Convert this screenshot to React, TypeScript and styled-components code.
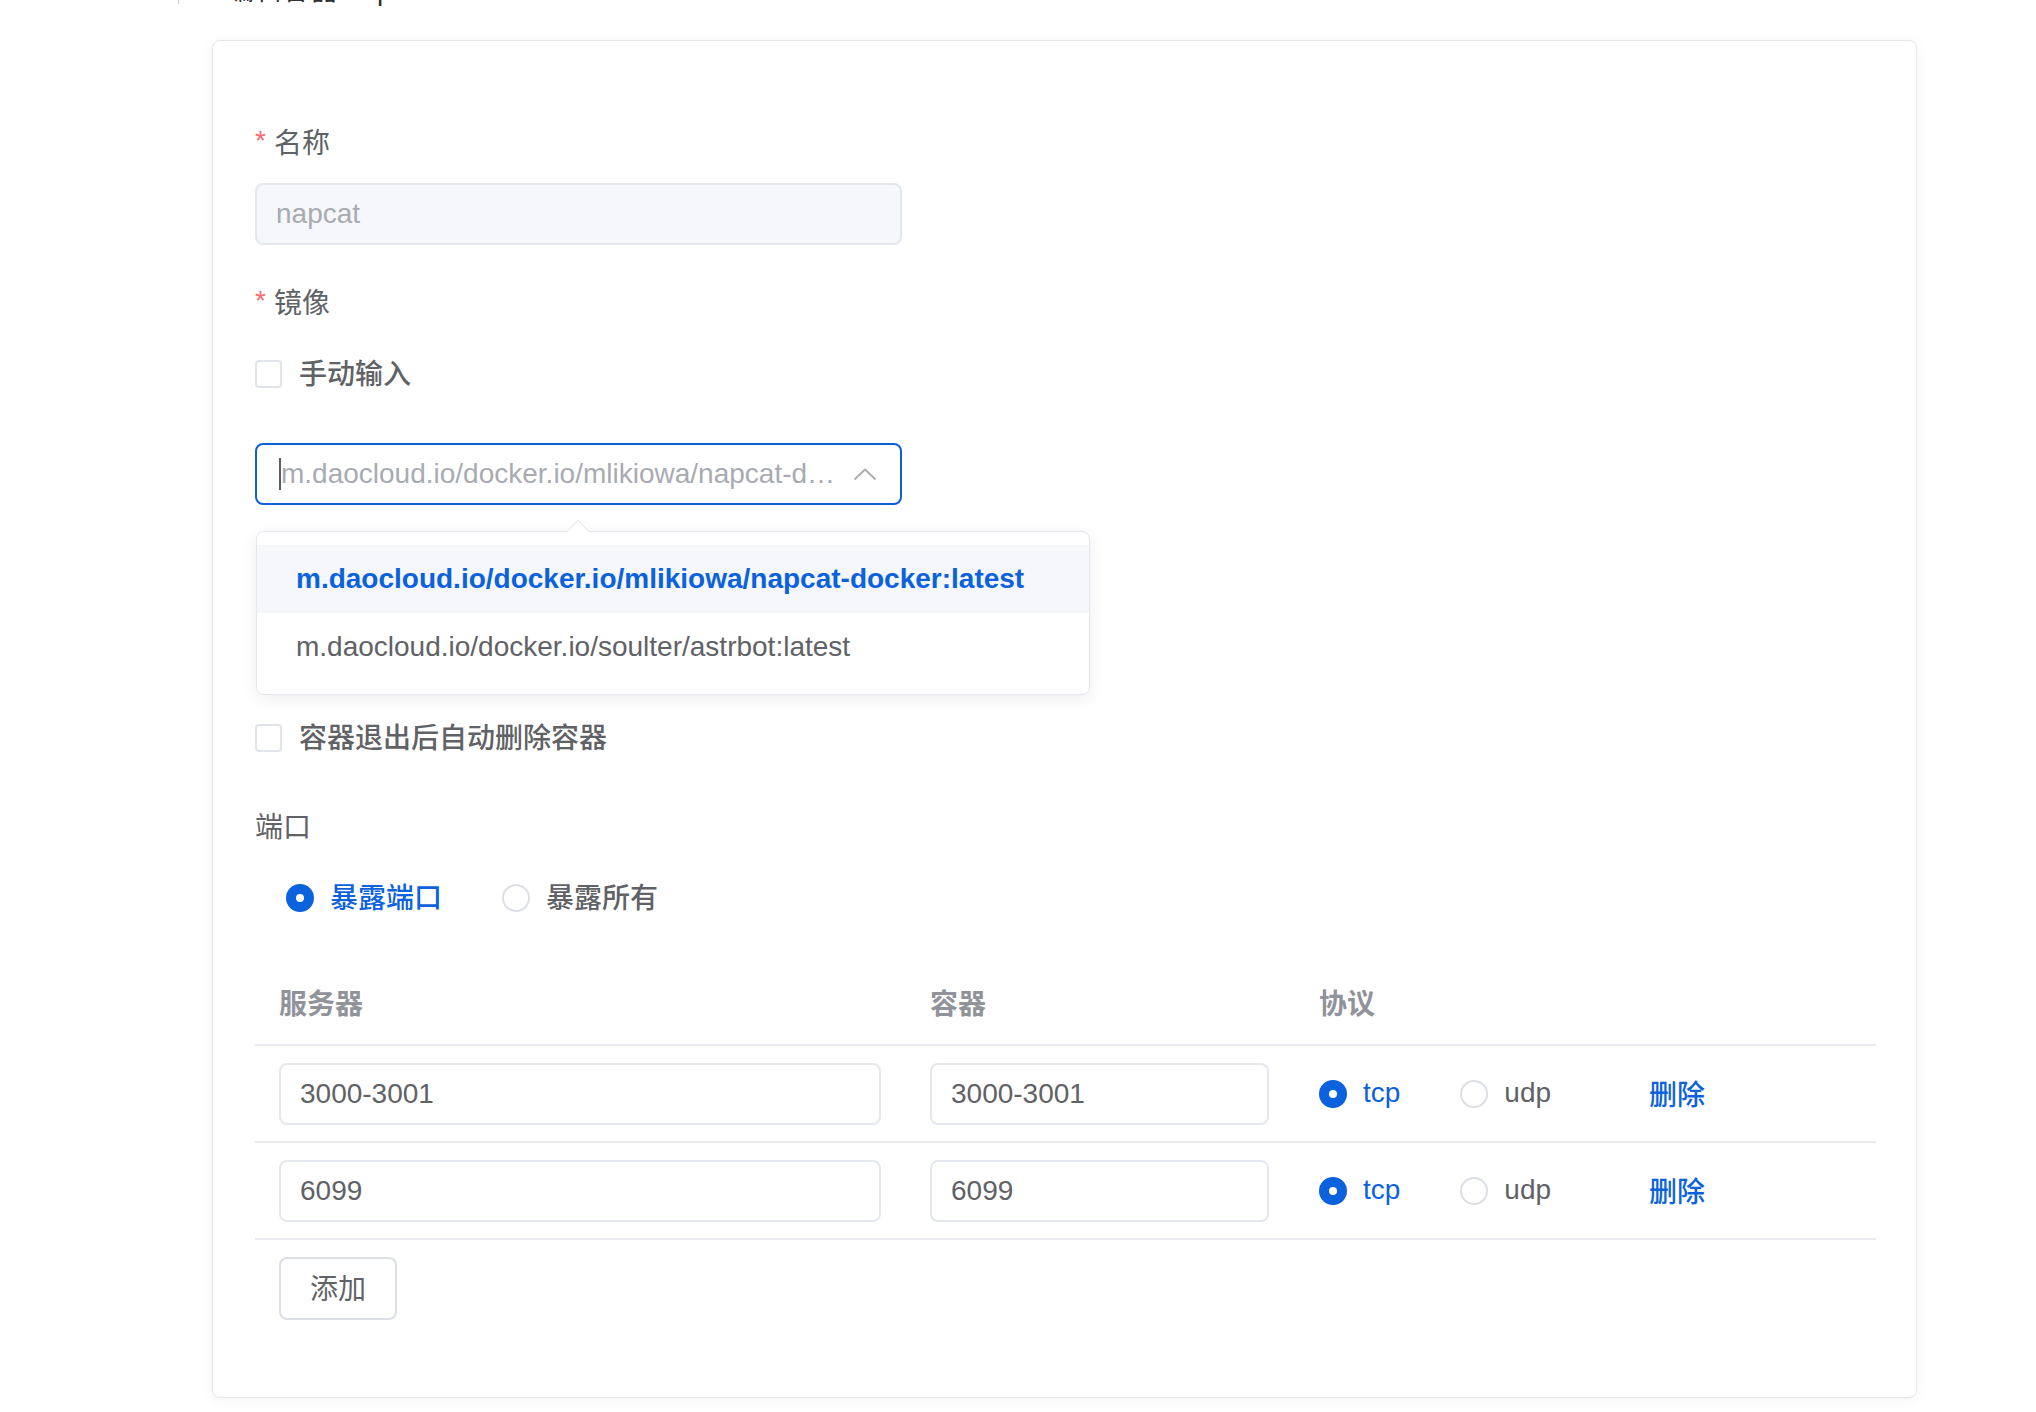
import React from "react";
import styled, { createGlobalStyle } from "styled-components";

const BLUE = "#0b62dc";
const TEXT = "#606266";
const PLACEHOLDER = "#a8abb2";
const LINE = "#e4e7ed";

const GlobalStyle = createGlobalStyle`
  html, body { margin: 0; padding: 0; background: #ffffff; }
  body {
    font-family: "Liberation Sans", "Noto Sans CJK SC", sans-serif;
    color: ${TEXT};
  }
  * { box-sizing: border-box; }
`;

const Page = styled.div`
  width: 2036px;
  min-height: 1412px;
  background: #fff;
`;

const TopBar = styled.div`
  height: 14px;
  overflow: hidden;
  display: flex;
  align-items: flex-start;
  padding-left: 178px;
`;

const TopTick = styled.span`
  flex: none;
  width: 1px;
  height: 4px;
  background: #c8cbd2;
`;

const TopTitle = styled.span`
  margin-left: 47px;
  margin-top: -23px;
  font-size: 28px;
  line-height: 28px;
  color: #303133;
  white-space: nowrap;
`;

const Card = styled.section`
  margin: 26px 0 0 212px;
  width: 1705px;
  border: 1px solid ${LINE};
  border-radius: 8px;
  box-shadow: 0 2px 14px rgba(0, 0, 0, 0.05);
  padding: 81px 40px 77px 42px;
  background: #fff;
`;

const Label = styled.div<{ $mt?: number }>`
  display: flex;
  align-items: center;
  height: 40px;
  padding-bottom: 2px;
  margin-top: ${(p) => p.$mt ?? 0}px;
  font-size: 28px;
  color: ${TEXT};
`;

const Required = styled.span`
  color: #f56c6c;
  margin-right: 8px;
  font-size: 28px;
`;

const TextInput = styled.input<{ $mt?: number }>`
  display: block;
  width: 647px;
  height: 62px;
  margin-top: ${(p) => p.$mt ?? 0}px;
  padding: 0 19px;
  border: 2px solid ${LINE};
  border-radius: 8px;
  font-family: inherit;
  font-size: 28px;
  color: ${TEXT};
  background: #fff;
  outline: none;

  &:disabled {
    background: #f5f7fa;
    color: ${PLACEHOLDER};
    -webkit-text-fill-color: ${PLACEHOLDER};
    opacity: 1;
  }
`;

const CheckRow = styled.label<{ $mt?: number }>`
  display: flex;
  align-items: center;
  height: 40px;
  margin-top: ${(p) => p.$mt ?? 0}px;
`;

const CheckBox = styled.span`
  flex: none;
  width: 27px;
  height: 28px;
  border: 2px solid #e1e4ea;
  border-radius: 4px;
  background: #fff;
`;

const CheckText = styled.span`
  margin-left: 17px;
  padding-bottom: 4px;
  font-size: 28px;
  font-weight: 500;
  color: ${TEXT};
`;

const SelectWrap = styled.div<{ $mt?: number }>`
  position: relative;
  width: 647px;
  margin-top: ${(p) => p.$mt ?? 0}px;
`;

const SelectBox = styled.div`
  display: flex;
  align-items: center;
  height: 62px;
  padding: 0 24px 0 22px;
  border: 2px solid #0d5fd4;
  border-radius: 8px;
  background: #fff;
`;

const Caret = styled.span`
  flex: none;
  width: 2px;
  height: 32px;
  background: #5a5e66;
`;

const SelectText = styled.span`
  flex: 1;
  min-width: 0;
  margin-right: 16px;
  font-size: 28px;
  color: ${PLACEHOLDER};
  white-space: nowrap;
  overflow: hidden;
  text-overflow: ellipsis;
`;

const Chevron = styled.svg`
  flex: none;
  width: 22px;
  height: 12px;
`;

const Popper = styled.div`
  position: absolute;
  top: calc(100% + 26px);
  left: 1px;
  width: 834px;
  padding: 13px 0;
  background: #fff;
  border: 1px solid ${LINE};
  border-radius: 8px;
  box-shadow: 0 4px 16px rgba(0, 0, 0, 0.07);
  z-index: 10;
`;

const PopperArrow = styled.span`
  position: absolute;
  top: -9px;
  left: 313px;
  width: 16px;
  height: 16px;
  background: #fff;
  border-top: 1px solid ${LINE};
  border-left: 1px solid ${LINE};
  transform: rotate(45deg);
`;

const Option = styled.div<{ $active?: boolean }>`
  display: flex;
  align-items: center;
  height: 68px;
  padding-left: 39px;
  font-size: 28px;
  white-space: nowrap;
  background: ${(p) => (p.$active ? "#f5f7fa" : "#fff")};
  color: ${(p) => (p.$active ? BLUE : TEXT)};
  font-weight: ${(p) => (p.$active ? 700 : 400)};
`;

const RadioRow = styled.div<{ $mt?: number; $pl?: number }>`
  display: flex;
  align-items: center;
  height: 40px;
  margin-top: ${(p) => p.$mt ?? 0}px;
  padding-left: ${(p) => p.$pl ?? 0}px;
  gap: 60px;
`;

const RadioOption = styled.label`
  display: flex;
  align-items: center;
`;

const RadioDot = styled.span<{ $on?: boolean }>`
  position: relative;
  flex: none;
  width: 28px;
  height: 28px;
  border-radius: 50%;
  border: 2px solid ${(p) => (p.$on ? BLUE : "#dcdfe6")};
  background: ${(p) => (p.$on ? BLUE : "#fff")};

  &::after {
    content: "";
    display: ${(p) => (p.$on ? "block" : "none")};
    position: absolute;
    left: 50%;
    top: 50%;
    width: 8px;
    height: 8px;
    border-radius: 50%;
    background: #fff;
    transform: translate(-50%, -50%);
  }
`;

const RadioText = styled.span<{ $on?: boolean; $bold?: boolean }>`
  margin-left: 16px;
  padding-bottom: ${(p) => (p.$bold ? 4 : 2)}px;
  font-size: 28px;
  font-weight: ${(p) => (p.$bold ? 500 : 400)};
  color: ${(p) => (p.$on ? BLUE : TEXT)};
`;

const Table = styled.div<{ $mt?: number }>`
  margin-top: ${(p) => p.$mt ?? 0}px;
  width: 1621px;
`;

const TableRow = styled.div<{ $head?: boolean }>`
  display: grid;
  grid-template-columns: 651px 389px 1fr;
  align-items: center;
  height: ${(p) => (p.$head ? 81 : 97)}px;
  padding-bottom: ${(p) => (p.$head ? 6 : 0)}px;
  border-bottom: 2px solid #e9ebf1;
`;

const HeadCell = styled.div`
  padding-left: 24px;
  font-size: 28px;
  font-weight: 700;
  color: #909399;
`;

const Cell = styled.div<{ $pr?: number }>`
  display: flex;
  align-items: center;
  padding-left: 24px;
  padding-right: ${(p) => p.$pr ?? 0}px;
`;

const CellInput = styled(TextInput)`
  width: 100%;
`;

const DeleteLink = styled.span`
  margin-left: 98px;
  padding-bottom: 2px;
  font-size: 28px;
  font-weight: 500;
  color: ${BLUE};
`;

const AddButton = styled.button`
  display: block;
  width: 118px;
  height: 63px;
  margin: 17px 0 0 24px;
  padding: 0 0 3px;
  border: 2px solid #dcdfe6;
  border-radius: 8px;
  background: #fff;
  font-family: inherit;
  font-size: 28px;
  color: ${TEXT};
`;

const ports = [
  { host: "3000-3001", container: "3000-3001" },
  { host: "6099", container: "6099" },
];

export default function App() {
  return (
    <Page>
      <GlobalStyle />
      <TopBar>
        <TopTick />
        <TopTitle>编辑容器 napcat</TopTitle>
      </TopBar>
      <Card>
        <Label>
          <Required>*</Required>名称
        </Label>
        <TextInput $mt={21} disabled value="napcat" readOnly />

        <Label $mt={37}>
          <Required>*</Required>镜像
        </Label>
        <CheckRow $mt={32}>
          <CheckBox />
          <CheckText>手动输入</CheckText>
        </CheckRow>

        <SelectWrap $mt={49}>
          <SelectBox>
            <Caret />
            <SelectText>m.daocloud.io/docker.io/mlikiowa/napcat-docker:latest</SelectText>
            <Chevron viewBox="0 0 22 12">
              <polyline
                points="1,11 11,1.5 21,11"
                fill="none"
                stroke="#a8abb2"
                strokeWidth="1.8"
                strokeLinecap="round"
                strokeLinejoin="round"
              />
            </Chevron>
          </SelectBox>
          <Popper>
            <PopperArrow />
            <Option $active>m.daocloud.io/docker.io/mlikiowa/napcat-docker:latest</Option>
            <Option>m.daocloud.io/docker.io/soulter/astrbot:latest</Option>
          </Popper>
        </SelectWrap>

        <CheckRow $mt={213}>
          <CheckBox />
          <CheckText>容器退出后自动删除容器</CheckText>
        </CheckRow>

        <Label $mt={48}>端口</Label>
        <RadioRow $mt={32} $pl={31}>
          <RadioOption>
            <RadioDot $on />
            <RadioText $on $bold>
              暴露端口
            </RadioText>
          </RadioOption>
          <RadioOption>
            <RadioDot />
            <RadioText $bold>暴露所有</RadioText>
          </RadioOption>
        </RadioRow>

        <Table $mt={47}>
          <TableRow $head>
            <HeadCell>服务器</HeadCell>
            <HeadCell>容器</HeadCell>
            <HeadCell>协议</HeadCell>
          </TableRow>
          {ports.map((p, i) => (
            <TableRow key={i}>
              <Cell $pr={25}>
                <CellInput value={p.host} readOnly />
              </Cell>
              <Cell $pr={26}>
                <CellInput value={p.container} readOnly />
              </Cell>
              <Cell>
                <RadioRow>
                  <RadioOption>
                    <RadioDot $on />
                    <RadioText $on>tcp</RadioText>
                  </RadioOption>
                  <RadioOption>
                    <RadioDot />
                    <RadioText>udp</RadioText>
                  </RadioOption>
                </RadioRow>
                <DeleteLink>删除</DeleteLink>
              </Cell>
            </TableRow>
          ))}
        </Table>
        <AddButton>添加</AddButton>
      </Card>
    </Page>
  );
}
